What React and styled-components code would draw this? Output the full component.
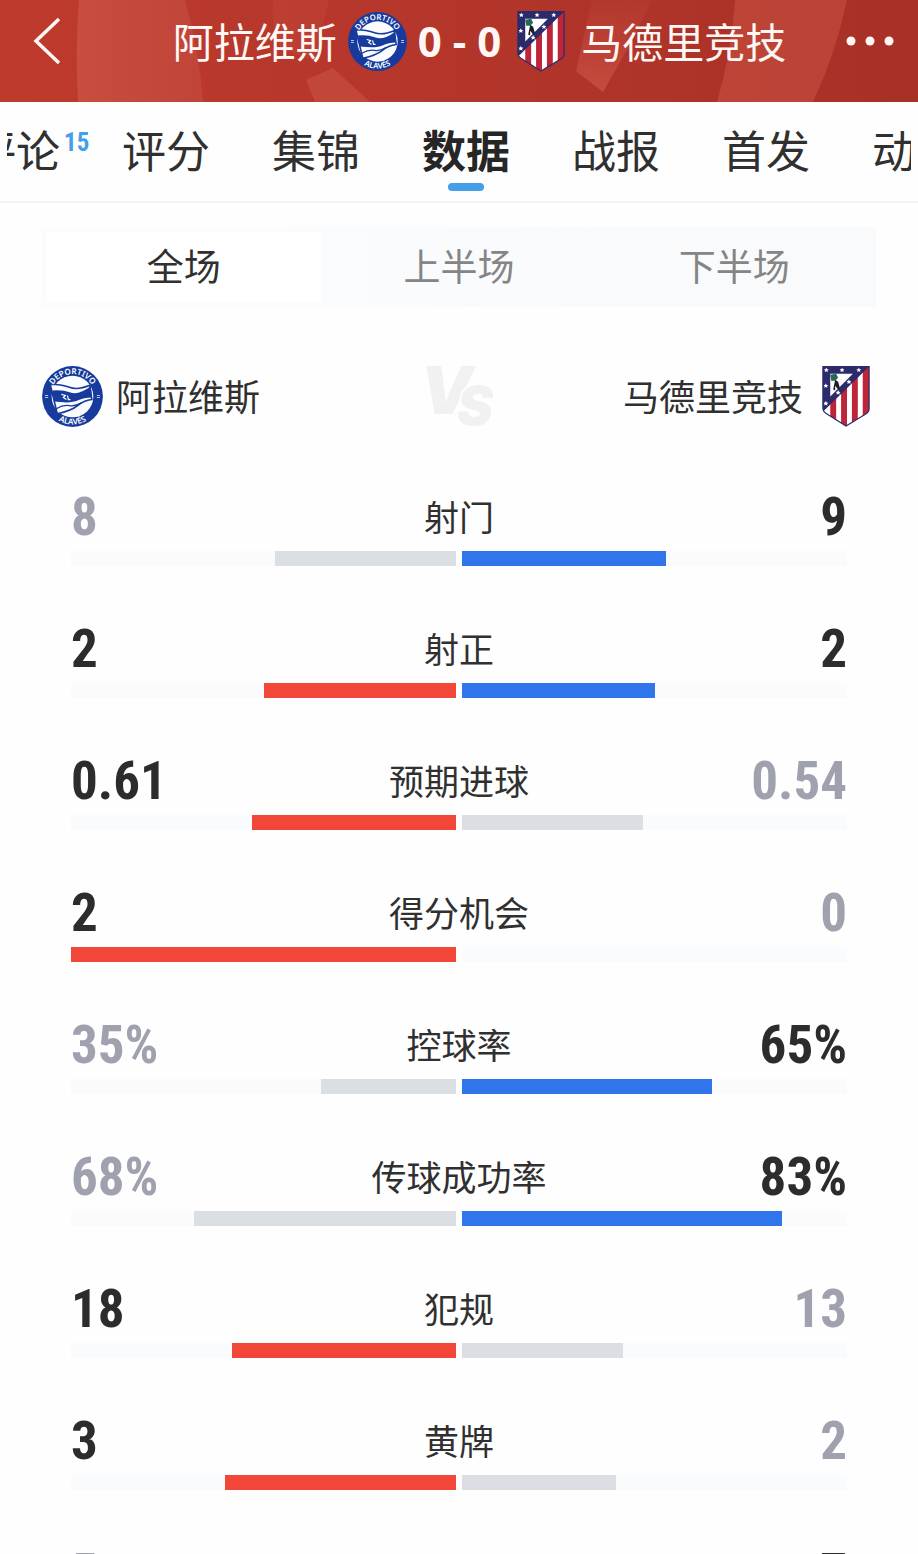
import React, { useState } from 'react';
import styled, { createGlobalStyle } from 'styled-components';

const GlobalStyle = createGlobalStyle`
  * {
    box-sizing: border-box;
  }

  body {
    margin: 0;
    background: #fefefe;
    color: #303030;
    font-family: 'Noto Sans CJK SC', sans-serif;
  }

  button {
    border: none;
    padding: 0;
    background: none;
    color: inherit;
    font: inherit;
    cursor: pointer;
  }
`;

const condensed = "'Roboto Condensed', Roboto, sans-serif";

const Page = styled.div`
  height: 100vh;
  overflow: hidden;
`;

const Header = styled.header`
  position: relative;
  display: flex;
  align-items: center;
  height: 102px;
  padding-bottom: 20px;
  color: #fff7f3;
  background: linear-gradient(90deg, #be3a2d, #b5362b 45%, #a73027);
`;

const HeaderArt = styled.svg`
  position: absolute;
  inset: 0;
  width: 100%;
  height: 100%;
`;

const BackButton = styled.button`
  position: relative;
  display: flex;
  width: 113px;
  padding-left: 32px;
`;

const MoreButton = styled.button`
  position: relative;
  display: flex;
  width: 72px;
`;

const MatchTitle = styled.h1`
  position: relative;
  flex: 1;
  display: flex;
  align-items: center;
  justify-content: center;
  gap: 11px;
  margin: 0;
  font-size: 41px;
  line-height: 56px;
  font-weight: 400;
  white-space: nowrap;
`;

const TitleName = styled.span`
  padding-bottom: 2px;
`;

const Score = styled.span`
  padding-right: 5px;
  font-family: 'Noto Sans', sans-serif;
  font-size: 42px;
  font-weight: 700;
`;

const AwayName = styled(TitleName)`
  padding-left: 5px;
`;

const Nav = styled.nav`
  display: flex;
  justify-content: center;
  gap: 62px;
  height: 99px;
  margin: 0 7px;
  padding-left: 14px;
  overflow: hidden;
`;

const NavLink = styled.a`
  position: relative;
  flex: none;
  color: ${props => props.$active ? '#262626' : '#303030'};
  font-size: 44px;
  font-weight: ${props => props.$active ? 700 : 400};
  line-height: 95px;
  text-decoration: none;

  &::after {
    content: '';
    display: ${props => props.$active ? 'block' : 'none'};
    position: absolute;
    left: 26px;
    right: 26px;
    bottom: 10px;
    height: 8px;
    border-radius: 4px;
    background: #459ee8;
  }
`;

const NavCount = styled.sup`
  position: absolute;
  top: 27px;
  left: 92px;
  color: #459ee8;
  font-family: ${condensed};
  font-size: 25px;
  font-weight: 700;
  line-height: 27px;
`;

const Content = styled.main`
  padding: 24px 42px 0;
  border-top: 2px solid #f3f3f4;
`;

const Segments = styled.div`
  display: flex;
  height: 80px;
  padding: 5px 4px;
  background: linear-gradient(90deg, #fcfcfd, #f9fbfd 40%, #f9fafc);
`;

const Segment = styled.button`
  flex: 1;
  padding-bottom: 4px;
  font-size: 37px;
  line-height: 60px;
  color: ${props => props.$active ? '#303030' : '#858585'};
  background: ${props => props.$active ? '#fff' : 'transparent'};
`;

const Teams = styled.div`
  display: grid;
  grid-template-columns: 1fr auto 1fr;
  align-items: center;
  padding: 58px 6px 0 0;
`;

const Team = styled.div`
  display: flex;
  align-items: center;
  justify-content: ${props => props.$away ? 'flex-end' : 'flex-start'};
  gap: ${props => props.$away ? 19 : 13}px;
  font-size: 36px;
  line-height: 58px;
`;

const TeamName = styled.span`
  padding-bottom: 2px;
`;

const StatList = styled.div`
  display: flex;
  flex-direction: column;
  gap: 59px;
  padding: 66px 29px 0;
`;

const StatHead = styled.div`
  display: grid;
  grid-template-columns: 1fr auto 1fr;
  height: 58px;
`;

const StatValue = styled.strong`
  color: ${props => props.$dim ? '#9fa2ae' : '#2c2c2e'};
  font-family: ${condensed};
  font-size: 53px;
  line-height: 48px;
  text-align: ${props => props.$away ? 'right' : 'left'};
`;

const StatLabel = styled.span`
  font-size: 35px;
  line-height: 45px;
`;

const Bars = styled.div`
  display: flex;
  gap: 6px;
`;

const Track = styled.div`
  flex: 1;
  display: flex;
  justify-content: ${props => props.$away ? 'flex-start' : 'flex-end'};
  height: 15px;
  background: #fafbfc;
`;

const Fill = styled.div`
  background: ${props => props.$color};
`;

const tabs = ['评论', '评分', '集锦', '数据', '战报', '首发', '动态'];
const periods = ['全场', '上半场', '下半场'];

const stats = [
  { label: '射门', home: 8, away: 9 },
  { label: '射正', home: 2, away: 2 },
  { label: '预期进球', home: 0.61, away: 0.54 },
  { label: '得分机会', home: 2, away: 0 },
  { label: '控球率', home: 35, away: 65, percent: true },
  { label: '传球成功率', home: 68, away: 83, percent: true },
  { label: '犯规', home: 18, away: 13 },
  { label: '黄牌', home: 3, away: 2 },
  { label: '角球', home: 5, away: 7 },
];

function AlavesBadge({ size, id }) {
  return (
    <svg width={size} height={size} viewBox="0 0 60 60" role="img" aria-label="Deportivo Alavés">
      <defs>
        <path id={`${id}-top`} d="M8 30a22 22 0 0 1 44 0" />
        <path id={`${id}-bottom`} d="M2.500 30a27.500 27.500 0 0 0 55 0" />
      </defs>
      <circle cx="30" cy="30" r="29.900" fill="#173b9c" />
      <circle cx="30" cy="30" r="20.500" fill="#fafcff" />
      <path d="M8 18q11 0 19 3t20-2l2 14q-8 1-14 6t-20 8z" fill="#fafcff" stroke="#173b9c" strokeWidth="1.600" />
      <path d="M10 24q10-1 18 2t20-6l1 11q-8 0-14 3t-23 1z" fill="#173b9c" />
      <path d="M14 42q7-4 13-3t12-3" fill="none" stroke="#173b9c" strokeWidth="1.300" />
      <path d="m19 28 4 1-2 2 3 2m1-4 1 4h2" fill="none" stroke="#fafcff" strokeWidth="1.200" />
      <path d="M3 29h3m-3 2h3m48-2h3m-3 2h3" stroke="#b9c8ec" strokeWidth="1" />
      <text fill="#fff" fontFamily="Noto Sans, sans-serif" fontSize="8" fontWeight="600">
        <textPath href={`#${id}-top`} startOffset="50%" textAnchor="middle">DEPORTIVO</textPath>
      </text>
      <text fill="#fff" fontFamily="Noto Sans, sans-serif" fontSize="8" fontWeight="600">
        <textPath href={`#${id}-bottom`} startOffset="50%" textAnchor="middle">ALAVÉS</textPath>
      </text>
    </svg>
  );
}

function AtleticoBadge({ id }) {
  const stars = [[4, 4], [20, 4], [37, 4], [3.5, 20], [3.5, 38], [16, 27], [27, 16]];
  return (
    <svg width="48" height="61" viewBox="0 0 48 62" role="img" aria-label="Atlético de Madrid">
      <clipPath id={id}>
        <path d="M.500.500h47v43q0 3-3 5L24 61 3.500 48q-3-2-3-5z" />
      </clipPath>
      <g clipPath={`url(#${id})`}>
        <path d="M0 0h48v62H0z" fill="#fff" />
        <path d="M8 0h6v62H8zM19 0h6v62h-6zM30 0h6v62h-6zM41 0h7v62h-7z" fill="#bd2639" />
        <path d="M0 0h48L0 47z" fill="#2b2b6b" />
        <path d="M8 8h23L8 31z" fill="#fff" />
        <path d="m8 9 6-1 2 4-3 3H9z" fill="#256952" />
        <path d="m13 14 3 2 2 7-2 1-3-4v5l-2-1z" fill="#1d1d28" />
        {stars.map(([x, y]) => (
          <path
            key={`${x}-${y}`}
            d={`M${x} ${y - 2.5}l.8 1.700 1.700.1-1.300 1.200.4 1.700-1.600-.9-1.600.9.4-1.700-1.300-1.200 1.700-.1z`}
            fill="#fff"
          />
        ))}
      </g>
      <path d="M.500.500h47v43q0 3-3 5L24 61 3.500 48q-3-2-3-5z" fill="none" stroke="#2b2b6b" strokeWidth="1.200" />
    </svg>
  );
}

function VersusMark() {
  return (
    <svg width="76" height="62" viewBox="0 0 76 62" fontFamily="Inter, sans-serif" fontStyle="italic" fontWeight="900">
      <text x="2" y="49" fontSize="66" fill="#f1f1f1">V</text>
      <text x="39" y="60" fontSize="54" fill="#f1f1f1" stroke="#fefefe" strokeWidth="4" paintOrder="stroke">S</text>
    </svg>
  );
}

function StatRow({ label, home, away, percent }) {
  const total = percent ? 100 : home + away;
  const unit = percent ? '%' : '';
  return (
    <section>
      <StatHead>
        <StatValue $dim={home < away}>{home}{unit}</StatValue>
        <StatLabel>{label}</StatLabel>
        <StatValue $away $dim={away < home}>{away}{unit}</StatValue>
      </StatHead>
      <Bars>
        <Track>
          <Fill $color={home < away ? '#dbdee3' : '#f14638'} style={{ width: `${(home / total) * 100}%` }} />
        </Track>
        <Track $away>
          <Fill $color={away < home ? '#dbdee3' : '#3175ec'} style={{ width: `${(away / total) * 100}%` }} />
        </Track>
      </Bars>
    </section>
  );
}

function App() {
  const [activeTab, setActiveTab] = useState('数据');
  const [period, setPeriod] = useState('全场');

  return (
    <>
      <GlobalStyle />
      <Page>
        <Header>
          <HeaderArt viewBox="0 0 918 102" preserveAspectRatio="none" aria-hidden="true">
            <defs>
              <linearGradient id="band" x1="0" x2="1">
                <stop offset="0" stopColor="#cd5546" stopOpacity="0.75" />
                <stop offset="1" stopColor="#c64e40" stopOpacity="0.55" />
              </linearGradient>
              <linearGradient id="ray" x1="0" x2="0" y1="0" y2="1">
                <stop offset="0" stopColor="#cd5546" stopOpacity="0.1" />
                <stop offset="1" stopColor="#cd5546" stopOpacity="0.7" />
              </linearGradient>
            </defs>
            <path d="M79 0q-4 50-1 102h125q-4-55-18-102z" fill="url(#band)" />
            <path d="M273 0h56l-15 60-32-10q-12-22-9-50z" fill="#cd5546" opacity="0.25" />
            <path d="m306 80 27-12 37 34h-55z" fill="#cd5546" opacity="0.55" />
            <path d="M592 0h60l-25 50-24 42-27-21z" fill="url(#ray)" />
            <path d="M735 0h112q-12 56-34 102h-96q15-52 18-102z" fill="#cd5546" opacity="0.5" />
          </HeaderArt>
          <BackButton aria-label="返回">
            <svg width="30" height="48" viewBox="0 0 30 48" fill="none" stroke="currentColor" strokeWidth="3.500">
              <path d="M27 2 4 24l23 22" />
            </svg>
          </BackButton>
          <MatchTitle>
            <TitleName>阿拉维斯</TitleName>
            <AlavesBadge size={59} id="alaves-header" />
            <Score>0 - 0</Score>
            <AtleticoBadge id="atletico-header" />
            <AwayName>马德里竞技</AwayName>
          </MatchTitle>
          <MoreButton aria-label="更多">
            <svg width="50" height="12" viewBox="0 0 50 12" fill="currentColor">
              <circle cx="5" cy="6" r="4.500" />
              <circle cx="24" cy="6" r="4.500" />
              <circle cx="43" cy="6" r="4.500" />
            </svg>
          </MoreButton>
        </Header>

        <Nav>
          {tabs.map((tab, index) => (
            <NavLink key={tab} href="#" $active={tab === activeTab} onClick={() => setActiveTab(tab)}>
              {tab}
              {index === 0 && <NavCount>15</NavCount>}
            </NavLink>
          ))}
        </Nav>

        <Content>
          <Segments>
            {periods.map(name => (
              <Segment key={name} $active={name === period} onClick={() => setPeriod(name)}>
                {name}
              </Segment>
            ))}
          </Segments>

          <Teams>
            <Team>
              <AlavesBadge size={61} id="alaves-team" />
              <TeamName>阿拉维斯</TeamName>
            </Team>
            <VersusMark />
            <Team $away>
              <TeamName>马德里竞技</TeamName>
              <AtleticoBadge id="atletico-team" />
            </Team>
          </Teams>

          <StatList>
            {stats.map(stat => <StatRow key={stat.label} {...stat} />)}
          </StatList>
        </Content>
      </Page>
    </>
  );
}

export default App;
